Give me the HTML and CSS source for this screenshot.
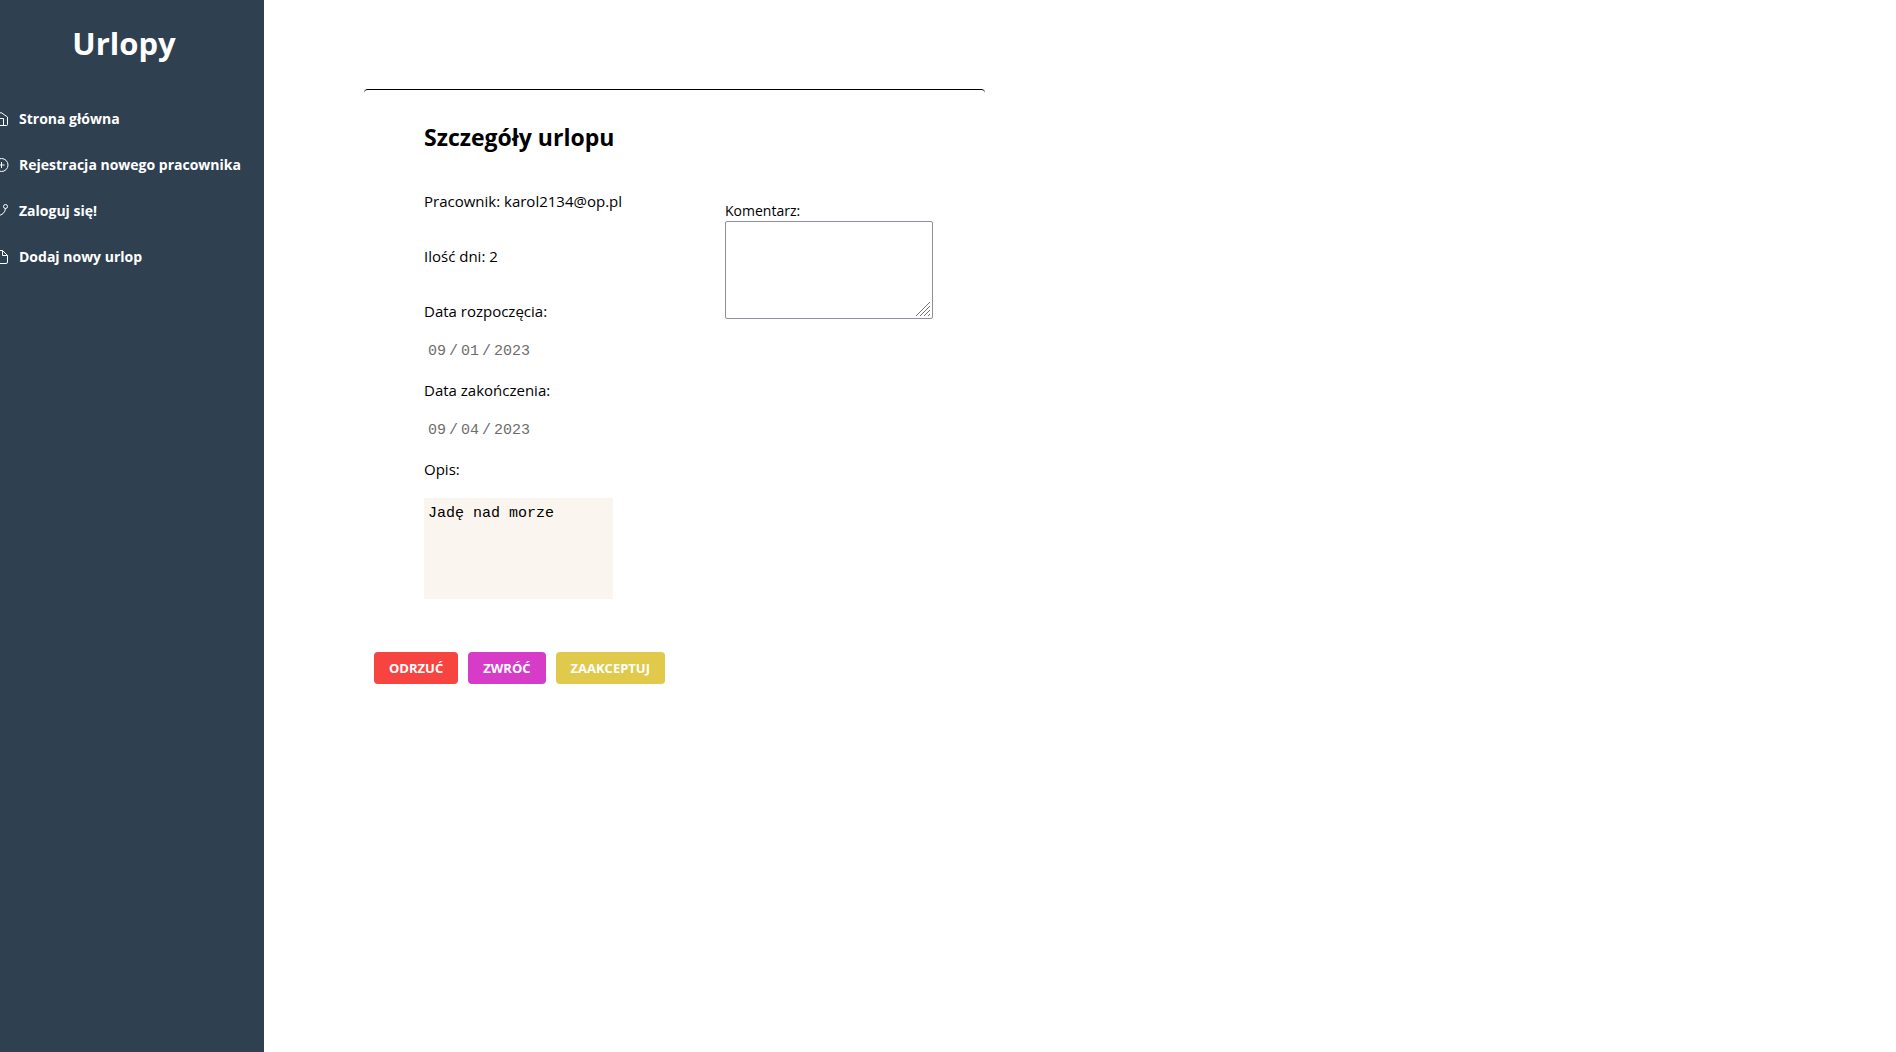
FILE: index.html
```html
<!DOCTYPE html>
<html lang="pl">
<head>
<meta charset="utf-8">
<title>Urlopy</title>
<meta name="viewport" content="width=device-width, initial-scale=1">
<link rel="stylesheet" href="styles.css">
</head>
<body>
<div class="layout">
  <aside class="sidebar">
    <h1 class="brand">Urlopy</h1>
    <nav class="menu">
      <a class="menu-link" href="#">
        <svg class="menu-icon" viewBox="0 0 16 16" aria-hidden="true"><path d="M1.500 6 8 1.500 14.500 6v7.500a1 1 0 0 1-1 1h-11a1 1 0 0 1-1-1zM5.500 14.500v-7h5v7"/></svg>
        Strona główna
      </a>
      <a class="menu-link" href="#">
        <svg class="menu-icon" viewBox="0 0 16 16" aria-hidden="true"><circle cx="8.500" cy="8" r="6.500"/><path d="M8.500 5v6M5.500 8h6"/></svg>
        Rejestracja nowego pracownika
      </a>
      <a class="menu-link" href="#">
        <svg class="menu-icon" viewBox="0 0 16 16" aria-hidden="true"><circle cx="12.500" cy="3.500" r="2"/><circle cx="3" cy="12.500" r="2"/><path d="M3 1.500v9M12.500 5.500A7.500 7.500 0 0 1 5 12.500"/></svg>
        Zaloguj się!
      </a>
      <a class="menu-link" href="#">
        <svg class="menu-icon" viewBox="0 0 16 16" aria-hidden="true"><path d="M9.500 1.500H4a1.500 1.500 0 0 0-1.500 1.500v10A1.500 1.500 0 0 0 4 14.500h9a1.500 1.500 0 0 0 1.500-1.500V6.500zM9.500 1.500v5h5"/></svg>
        Dodaj nowy urlop
      </a>
    </nav>
  </aside>
  <main class="content">
    <form class="card">
      <div class="columns">
        <section class="details">
          <h2 class="title">Szczegóły urlopu</h2>
          <p class="fact">Pracownik: karol2134@op.pl</p>
          <p class="fact">Ilość dni: 2</p>
          <label class="label" for="start">Data rozpoczęcia:</label>
          <input class="date" id="start" type="date" value="2023-09-01" disabled>
          <label class="label" for="end">Data zakończenia:</label>
          <input class="date" id="end" type="date" value="2023-09-04" disabled>
          <label class="label" for="description">Opis:</label>
          <textarea class="description" id="description" readonly>Jadę nad morze</textarea>
        </section>
        <section class="comment">
          <label class="comment-label" for="comment">Komentarz:</label>
          <div class="comment-field">
            <textarea class="comment-box" id="comment"></textarea>
            <svg class="grip" viewBox="0 0 16 16" aria-hidden="true"><path d="M1 15 15 1M5 15 15 5M9 15l6-6M13 15l2-2"/></svg>
          </div>
        </section>
      </div>
      <div class="actions">
        <button class="button reject" type="button">ODRZUĆ</button>
        <button class="button return" type="button">ZWRÓĆ</button>
        <button class="button accept" type="button">ZAAKCEPTUJ</button>
      </div>
    </form>
  </main>
</div>
</body>
</html>
```
FILE: styles.css
```css
* {
  box-sizing: border-box;
}

body {
  margin: 0;
  background: #fff;
  color: #000;
  font: 15px/20px "Open Sans", "Noto Sans", sans-serif;
}

.layout {
  display: flex;
  min-height: 100vh;
}

.sidebar {
  flex: 0 0 264px;
  padding-top: 23px;
  overflow: hidden;
  background: #2f4050;
  color: #fff;
}

.brand {
  margin: 0 16px 0 0;
  font-size: 31px;
  line-height: 40px;
  text-align: center;
}

.menu {
  display: flex;
  flex-direction: column;
  gap: 26px;
  margin-top: 46px;
}

.menu-link {
  display: flex;
  align-items: center;
  gap: 10px;
  margin-left: -7px;
  color: inherit;
  font-size: 14px;
  font-weight: 700;
  text-decoration: none;
  white-space: nowrap;
}

.menu-icon {
  flex: none;
  width: 16px;
  height: 16px;
  fill: none;
  stroke: #fff;
}

.content {
  flex: 1;
  padding: 89px 100px;
}

.card {
  width: 43%;
  min-width: 621px;
  border-top: 1px solid #000;
  border-radius: 4px;
}

.columns {
  display: flex;
  gap: 100px;
  padding: 31px 52px 0 60px;
}

.details {
  display: flex;
  flex-direction: column;
  align-items: flex-start;
  width: 201px;
}

.title {
  margin: 0 0 38px;
  font-size: 23px;
  line-height: 32px;
  white-space: nowrap;
}

.fact {
  margin: 0 0 35px;
  white-space: nowrap;
}

.label {
  margin-bottom: 19px;
}

.date {
  width: 160px;
  height: 24px;
  margin: 0 0 16px;
  padding: 0 4px;
  border: 0;
  background: none;
  color: #6d6d6d;
  font: 15px/20px "Liberation Mono", monospace;
}

.date::-webkit-datetime-edit-fields-wrapper,
.date::-webkit-datetime-edit,
.date::-webkit-datetime-edit-month-field,
.date::-webkit-datetime-edit-day-field,
.date::-webkit-datetime-edit-year-field {
  padding: 0;
  color: #6d6d6d;
}

.date::-webkit-datetime-edit-text {
  padding: 0 3px;
  color: #6d6d6d;
}

.date::-webkit-calendar-picker-indicator {
  display: none;
}

.description {
  width: 189px;
  height: 101px;
  padding: 6px 4px;
  border: 0;
  background: #faf5ee;
  color: #000;
  font: 15px/20px "Liberation Mono", monospace;
  resize: none;
}

.comment {
  flex: 1;
  padding-top: 80px;
}

.comment-label {
  display: block;
  font-size: 14px;
}

.comment-field {
  position: relative;
}

.comment-box {
  display: block;
  width: 100%;
  height: 98px;
  padding: 4px;
  border: 1px solid #8f8f9d;
  border-radius: 2px;
  font: 15px/20px "Liberation Mono", monospace;
  resize: none;
}

.grip {
  position: absolute;
  right: 2px;
  bottom: 2px;
  width: 16px;
  height: 16px;
  fill: none;
  stroke: #757575;
  pointer-events: none;
}

.actions {
  display: flex;
  gap: 10px;
  margin-top: 53px;
  padding-left: 10px;
}

.button {
  height: 32px;
  padding: 0 15px;
  border: 0;
  border-radius: 4px;
  color: #fff;
  font: 700 13px/16px "Open Sans", "Noto Sans", sans-serif;
}

.reject {
  background: #f84440;
}

.return {
  background: #d63cc8;
}

.accept {
  background: #e1c94c;
}
```
